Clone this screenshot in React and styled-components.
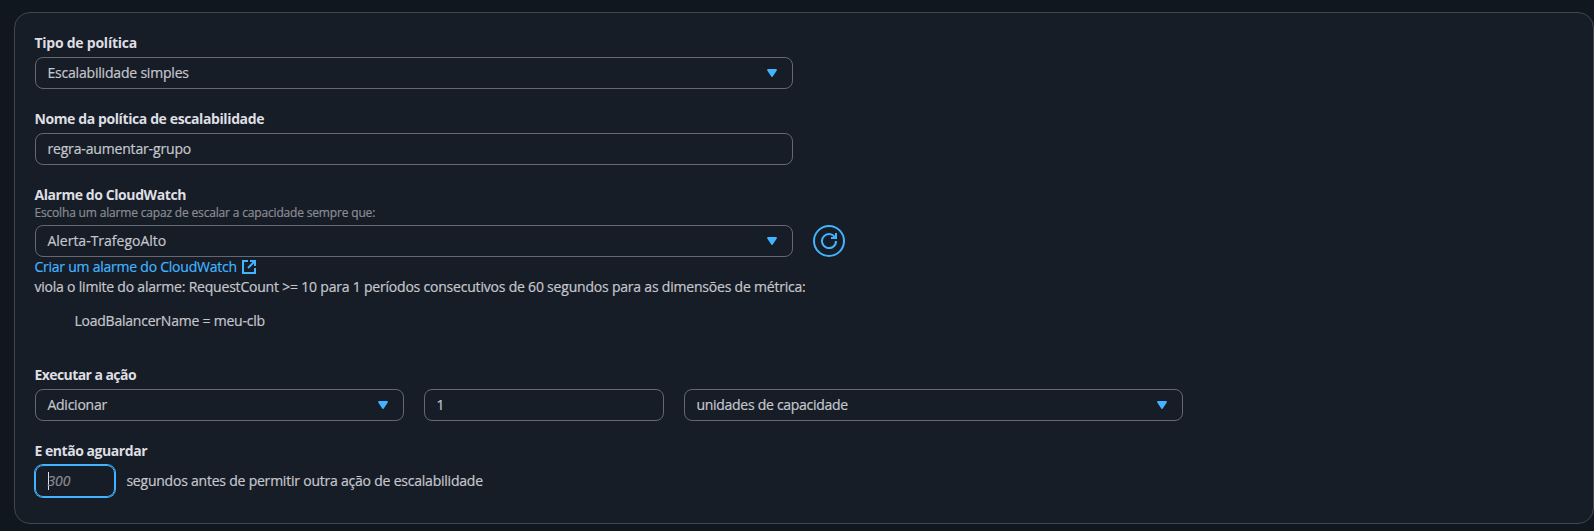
import React from 'react';
import styled, { createGlobalStyle } from 'styled-components';

const GlobalStyle = createGlobalStyle`
  * { box-sizing: border-box; }
  body {
    margin: 0;
    background: #10171f;
    color: #c6c6cd;
    font: 400 14px/20px "Open Sans", "Noto Sans", sans-serif;
    overflow: hidden;
  }
`;

const Page = styled.main`
  height: 531px;
  padding: 12px 0 7px 14px;
`;

const Card = styled.section`
  height: 512px;
  padding: 20px;
  border: 1px solid #424650;
  border-radius: 16px;
  background: #161d26;
`;

const Form = styled.form`
  display: flex;
  flex-direction: column;
  gap: 20px;
`;

const Field = styled.div`
  display: flex;
  flex-direction: column;
  align-items: flex-start;
`;

const Text = styled.span`
  margin-left: -0.6px;
  white-space: nowrap;
  letter-spacing: ${(p) => p.$track || 0}px;
  -webkit-text-stroke: 0.2px currentColor;
`;

const Label = styled(Text).attrs({ as: 'label' })`
  height: 20px;
  color: #dedee3;
  font-weight: 700;
  -webkit-text-stroke: 0;
`;

const Hint = styled(Text)`
  height: 16px;
  color: #8c8c94;
  font-size: 12px;
  line-height: 16px;
`;

const Row = styled.div`
  display: flex;
  align-items: center;
  gap: ${(p) => p.$gap || 20}px;
  margin-top: 4px;
`;

const Box = styled.div`
  display: flex;
  align-items: center;
  justify-content: space-between;
  width: ${(p) => p.$width}px;
  height: 32px;
  padding: 0 12px;
  border: 1px solid #656871;
  border-radius: 8px;
`;

const FocusedBox = styled(Box)`
  border-color: #42b4ff;
  box-shadow: 0 0 0 1px #42b4ff;
  justify-content: flex-start;
`;

const Cursor = styled.span`
  width: 1px;
  height: 18px;
  margin-right: -1px;
  background: #dedee3;
`;

const Placeholder = styled(Text)`
  color: #8c8c94;
  font-style: italic;
`;

const Icon = styled.svg.attrs({ viewBox: '0 0 16 16', width: 16, height: 16 })`
  flex: none;
  fill: none;
  stroke: #42b4ff;
  stroke-width: 2;
`;

const RefreshButton = styled.button.attrs({ type: 'button' })`
  display: flex;
  align-items: center;
  justify-content: center;
  width: 32px;
  height: 32px;
  padding: 0;
  border: 2px solid #42b4ff;
  border-radius: 50%;
  background: none;
`;

const Link = styled.a`
  display: flex;
  align-items: center;
  gap: 4px;
  height: 20px;
  color: #42b4ff;
`;

const Dimension = styled.div`
  height: 20px;
  margin: 14px 0 34px 40px;
`;

const Caret = () => (
  <Icon>
    <path d="M4 5h8l-4 6-4-6z" fill="#42b4ff" strokeWidth="1.8" strokeLinejoin="round" />
  </Icon>
);

const Select = ({ width, track, children }) => (
  <Box $width={width}>
    <Text $track={track}>{children}</Text>
    <Caret />
  </Box>
);

export default function App() {
  return (
    <>
      <GlobalStyle />
      <Page>
        <Card>
          <Form>
            <Field>
              <Label $track={-0.24}>Tipo de política</Label>
              <Row>
                <Select width={758} track={-0.19}>Escalabilidade simples</Select>
              </Row>
            </Field>
            <Field>
              <Label $track={-0.39}>Nome da política de escalabilidade</Label>
              <Row>
                <Box $width={758}><Text $track={-0.16}>regra-aumentar-grupo</Text></Box>
              </Row>
            </Field>
            <Field>
              <Label $track={-0.42}>Alarme do CloudWatch</Label>
              <Hint $track={-0.17}>Escolha um alarme capaz de escalar a capacidade sempre que:</Hint>
              <Row>
                <Select width={758} track={0}>Alerta-TrafegoAlto</Select>
                <RefreshButton aria-label="Atualizar">
                  <Icon>
                    <path d="M10 5h5V0" />
                    <path d="M15 8a7 7 0 1 1-.7-3" />
                  </Icon>
                </RefreshButton>
              </Row>
              <Link>
                <Text $track={-0.235}>Criar um alarme do CloudWatch</Text>
                <Icon>
                  <path d="M9 2h5v5" />
                  <path d="m7 9 7-7" />
                  <path d="M14 9v5H2V2h5" />
                </Icon>
              </Link>
              <Text $track={-0.205}>
                viola o limite do alarme: RequestCount &gt;= 10 para 1 períodos consecutivos de 60 segundos para as dimensões de métrica:
              </Text>
              <Dimension><Text $track={-0.22}>LoadBalancerName = meu-clb</Text></Dimension>
              <Label $track={-0.56}>Executar a ação</Label>
              <Row>
                <Select width={369} track={-0.24}>Adicionar</Select>
                <Box $width={240}><Text>1</Text></Box>
                <Select width={499} track={-0.28}>unidades de capacidade</Select>
              </Row>
            </Field>
            <Field>
              <Label $track={-0.45}>E então aguardar</Label>
              <Row $gap={12}>
                <FocusedBox $width={80}>
                  <Cursor />
                  <Placeholder>300</Placeholder>
                </FocusedBox>
                <Text $track={-0.22}>segundos antes de permitir outra ação de escalabilidade</Text>
              </Row>
            </Field>
          </Form>
        </Card>
      </Page>
    </>
  );
}
